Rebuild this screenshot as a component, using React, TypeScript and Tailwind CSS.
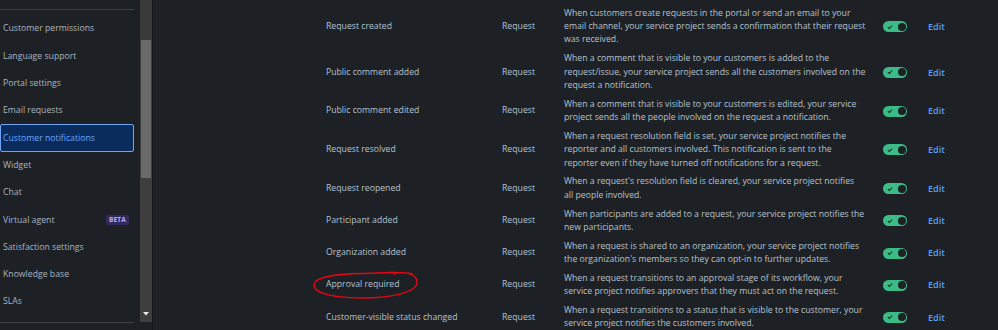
import React from "react";

const NAV_ITEMS = [
  "Customer permissions",
  "Language support",
  "Portal settings",
  "Email requests",
  "Customer notifications",
  "Widget",
  "Chat",
  "Virtual agent",
  "Satisfaction settings",
  "Knowledge base",
  "SLAs",
];

const ROWS: { name: string; lines: string[] }[] = [
  {
    name: "Request created",
    lines: [
      "When customers create requests in the portal or send an email to your",
      "email channel, your service project sends a confirmation that their request",
      "was received.",
    ],
  },
  {
    name: "Public comment added",
    lines: [
      "When a comment that is visible to your customers is added to the",
      "request/issue, your service project sends all the customers involved on the",
      "request a notification.",
    ],
  },
  {
    name: "Public comment edited",
    lines: [
      "When a comment that is visible to your customers is edited, your service",
      "project sends all the people involved on the request a notification.",
    ],
  },
  {
    name: "Request resolved",
    lines: [
      "When a request resolution field is set, your service project notifies the",
      "reporter and all customers involved. This notification is sent to the",
      "reporter even if they have turned off notifications for a request.",
    ],
  },
  {
    name: "Request reopened",
    lines: [
      "When a request's resolution field is cleared, your service project notifies",
      "all people involved.",
    ],
  },
  {
    name: "Participant added",
    lines: [
      "When participants are added to a request, your service project notifies the",
      "new participants.",
    ],
  },
  {
    name: "Organization added",
    lines: [
      "When a request is shared to an organization, your service project notifies",
      "the organization's members so they can opt-in to further updates.",
    ],
  },
  {
    name: "Approval required",
    lines: [
      "When a request transitions to an approval stage of its workflow, your",
      "service project notifies approvers that they must act on the request.",
    ],
  },
  {
    name: "Customer-visible status changed",
    lines: [
      "When a request transitions to a status that is visible to the customer, your",
      "service project notifies the customers involved.",
    ],
  },
];

const Toggle = () => (
  <div className="relative w-[24px] h-[11px] rounded-full bg-[#3bbb86] flex items-center">
    <svg width="6" height="6" viewBox="0 0 10 10" className="ml-[4px]">
      <path d="M1.5 5.2 L4 7.5 L8.5 2.5" fill="none" stroke="#1d2125" strokeWidth="1.8" />
    </svg>
    <div className="absolute right-[1.5px] top-[1.5px] w-[8px] h-[8px] rounded-full bg-[#1d2125]" />
  </div>
);

const Sidebar = () => (
  <div className="flex h-[330px] shrink-0">
    <div className="w-[140px] pt-[9px]">
      <div className="w-[134px] h-px bg-[#394047]" />
      <ul className="mt-[5.3px] w-[134px]">
        {NAV_ITEMS.map((item) => {
          const active = item === "Customer notifications";
          return (
            <li
              key={item}
              className={
                active
                  ? "h-[27.3px] flex items-center pl-[2px] border border-[#6ea6f5] bg-[#0a2c5c] text-[#6aa6f8] rounded-[2px]"
                  : "h-[27.3px] flex items-center pl-[3px] text-[#a9b4c0]"
              }
            >
              <span className="flex-1">{item}</span>
              {item === "Virtual agent" && (
                <span className="mr-[5px] px-[3px] h-[10px] leading-[10px] rounded-[2px] bg-[#33295e] text-[#b9a9f5] text-[6.5px] font-bold tracking-[0.2px]">
                  BETA
                </span>
              )}
            </li>
          );
        })}
      </ul>
      <div className="mt-[6px] w-[134px] h-px bg-[#394047]" />
    </div>
    <div className="w-[12px] h-[322px] bg-[#3e3e3e] flex flex-col">
      <div className="h-[40px] bg-[#3a3a3a]" />
      <div className="mx-[1px] h-[138px] bg-[#6a6a6a]" />
      <div className="flex-1 flex items-end justify-center pb-[6px]">
        <svg width="6" height="4" viewBox="0 0 6 4">
          <path d="M0 0 H6 L3 3.5 Z" fill="#e8e8e8" />
        </svg>
      </div>
    </div>
    <div className="w-px bg-[#15181b]" />
  </div>
);

export default function App() {
  return (
    <div className="w-[998px] h-[330px] overflow-hidden bg-[#1d2125] flex font-['Open_Sans',sans-serif] text-[8.7px]">
      <Sidebar />
      <div className="relative flex-1 pl-[173px] pt-[4px] text-[#b6c2cf] leading-[13.33px]">
        {ROWS.map((row) => (
          <div key={row.name} className="flex items-center py-[2.75px]">
            <div className="w-[176px] shrink-0">{row.name}</div>
            <div className="w-[62px] shrink-0">Request</div>
            <div className="w-[319px] shrink-0">
              {row.lines.map((line) => (
                <div key={line} className="whitespace-nowrap">
                  {line}
                </div>
              ))}
            </div>
            <div className="w-[45px] shrink-0">
              <Toggle />
            </div>
            <div className="text-[#5a9ff5] font-semibold text-[9px]">Edit</div>
          </div>
        ))}
        <svg
          className="absolute left-[159px] top-[268px]"
          width="112"
          height="34"
          viewBox="0 0 112 34"
        >
          <path
            d="M82 6 C96 2, 106 8, 105 15 C104 24, 80 30, 52 30 C24 30, 2 26, 2 17 C2 10, 20 6, 50 5.5 C70 5, 90 3, 100 6"
            fill="none"
            stroke="#e30613"
            strokeWidth="1.4"
            strokeLinecap="round"
          />
        </svg>
      </div>
    </div>
  );
}
